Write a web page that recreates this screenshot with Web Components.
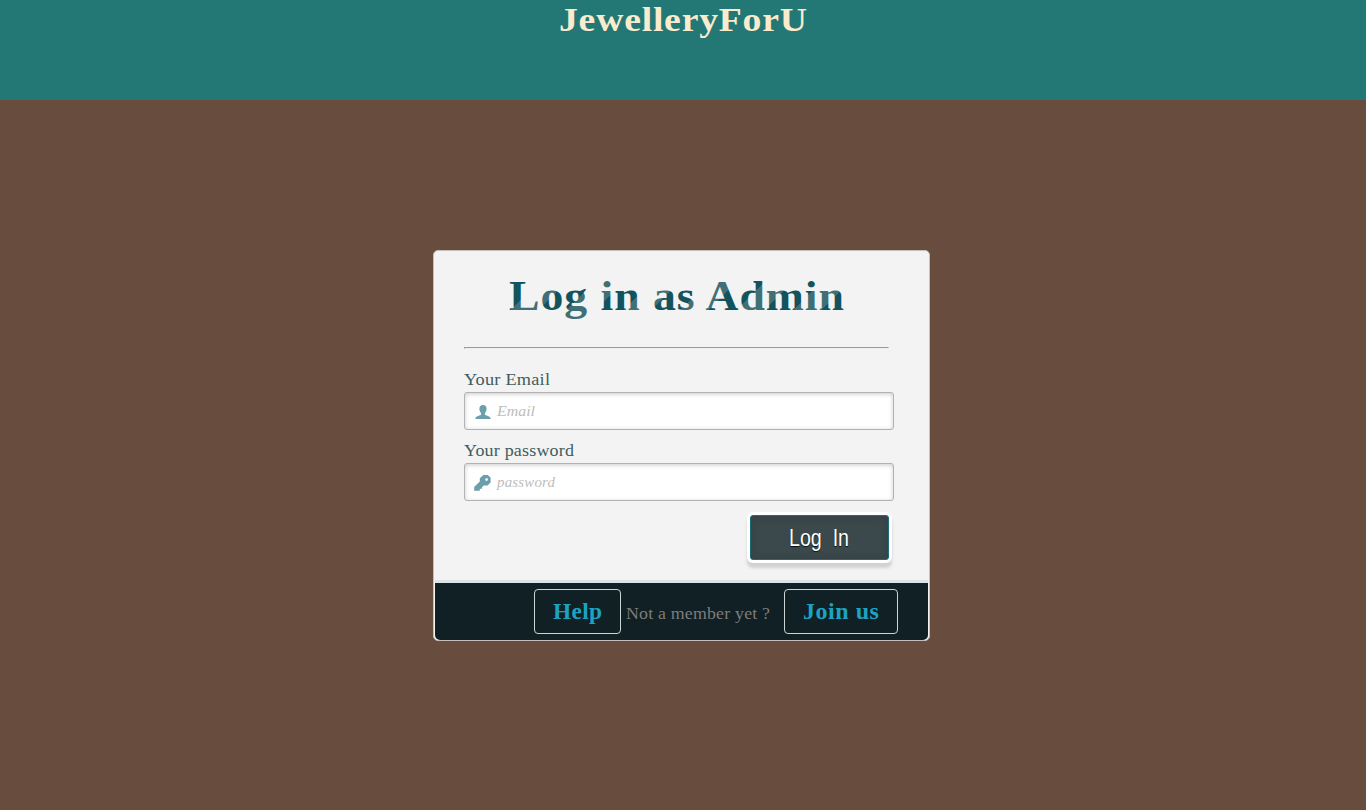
<!DOCTYPE html>
<html lang="en">
<head>
<meta charset="utf-8">
<title>JewelleryForU</title>
<style>
body{margin:0;background:#684c3e;height:810px;overflow:hidden;font-family:"Liberation Serif",serif}
</style>
</head>
<body>
<login-page></login-page>
<script>
// One line of text, set to a fixed measure. Attributes: w, h, size, base, x, track.
class FitText extends HTMLElement {
  connectedCallback() {
    const a = n => this.getAttribute(n);
    const x = a('x') || 0;
    this.attachShadow({mode: 'open'}).innerHTML = `
      <style>:host{display:block;flex:none;width:${a('w')}px;height:${a('h')}px}
      svg{display:block;overflow:visible}
      text{font-size:${a('size')}px;letter-spacing:${a('track') || 0}px;fill:var(--ink,currentColor);white-space:pre}</style>
      <svg width="${a('w')}" height="${a('h')}">
        <defs><linearGradient id="stripes" gradientUnits="userSpaceOnUse" x1="7" y1="7" x2="35.3" y2="35.3" spreadMethod="repeat">
          <stop offset="0" stop-color="#12535d"/><stop offset=".5" stop-color="#12535d"/>
          <stop offset=".5" stop-color="#406f76"/><stop offset="1" stop-color="#406f76"/>
        </linearGradient></defs>
        <text x="${x}" y="${a('base')}" textLength="${+a('w') + +(a('track') || 0)}" lengthAdjust="spacingAndGlyphs"></text>
      </svg>`;
    const t = this.shadowRoot.querySelector('text');
    t.textContent = this.textContent;
    if (this.hasAttribute('striped')) t.setAttribute('style', 'fill:url(#stripes)');
  }
}
customElements.define('fit-text', FitText);

class SiteHeader extends HTMLElement {
  connectedCallback() {
    this.attachShadow({mode: 'open'}).innerHTML = `
      <style>:host{display:flex;justify-content:center;height:100px;background:#237876;color:#faebcd;font-weight:bold}</style>
      <slot></slot>`;
  }
}
customElements.define('site-header', SiteHeader);

const ICONS = {
  user: '<path d="M8 0C5.7 0 4.3 1.5 4.4 3.7c0 1.8.7 3.3 1.7 4.3v1.5C5.6 10.7.5 11 .5 13.2V14h15v-.8c0-2.2-5.1-2.5-5.6-3.7V8c1-1 1.7-2.5 1.7-4.3C11.7 1.5 10.3 0 8 0Z"/>',
  key: '<path fill-rule="evenodd" d="M9.4 0h4.2L16.6 2.6v4.8l-3.1 3.2H9.8L8 12.2v1.6H5.8v2H.2v-3.8l5.6-5.6V3.2ZM12.6 3.2a1.4 1.4 0 1 0 0 2.8 1.4 1.4 0 0 0 0-2.8Z"/>'
};
class IconField extends HTMLElement {
  connectedCallback() {
    const i = this.getAttribute('icon');
    this.attachShadow({mode: 'open'}).innerHTML = `
      <style>:host{display:flex;flex-direction:column;width:430px;height:71px;color:#405c60}
      .box{box-sizing:border-box;display:flex;align-items:center;height:38px;margin-top:4px;padding:2px 0 0 9px;gap:5px;
        border:1px solid #b2b2b2;border-radius:3px;background:#fff;box-shadow:inset 0 1px 4px rgba(168,168,168,.6)}
      svg{width:17px;height:16px;fill:#6a9fab;flex:none}
      .hint{color:#bebcbc;font-style:italic;margin-left:1px}</style>
      <slot></slot><div class="box"><svg viewBox="${i === 'user' ? '-1 -1' : '0 0'} 17 16">${ICONS[i]}</svg><span class="hint"><slot name="hint"></slot></span></div>`;
  }
}
customElements.define('icon-field', IconField);

class SubmitButton extends HTMLElement {
  connectedCallback() {
    this.attachShadow({mode: 'open'}).innerHTML = `
      <style>:host{display:block;width:139px;height:45px}
      button{box-sizing:border-box;display:flex;justify-content:center;width:100%;height:100%;padding:0 2px 0 0;border:1px solid #1c6c7a;border-radius:3px;
        background:#3b494c;color:#fff;font-family:"Liberation Sans",sans-serif;
        box-shadow:0 1px 6px 4px rgba(0,0,0,.07) inset,0 0 0 3px #fefefe,0 5px 3px 3px #d2d2d2;text-shadow:0 1px 1px rgba(0,0,0,.8)}</style>
      <button><slot></slot></button>`;
  }
}
customElements.define('submit-button', SubmitButton);

class OutlineLink extends HTMLElement {
  connectedCallback() {
    this.attachShadow({mode: 'open'}).innerHTML = `
      <style>:host{box-sizing:border-box;display:flex;justify-content:center;flex:none;height:45px;border:1px solid #cbd5d6;border-radius:4px;color:#1da2c1;font-weight:bold}</style>
      <slot></slot>`;
  }
}
customElements.define('outline-link', OutlineLink);

class LoginCard extends HTMLElement {
  connectedCallback() {
    this.attachShadow({mode: 'open'}).innerHTML = `
      <style>:host{box-sizing:border-box;display:flex;flex-direction:column;width:497px;height:391px;margin:150px 0 0 433px;
        background:#f3f3f3;border:1px solid #c7bebb;border-radius:5px;overflow:hidden}
      .body{box-sizing:border-box;height:329px;padding:18px 0 0 30px}
      footer{box-sizing:border-box;display:flex;height:60px;margin:0 1px;padding:6px 0 0 99px;border-top:3px solid #dbe5e8;border-radius:0 0 5px 5px;background:#102024;color:#7f7c7c}</style>
      <div class="body"><slot></slot></div><footer><slot name="footer"></slot></footer>`;
  }
}
customElements.define('login-card', LoginCard);

class LoginPage extends HTMLElement {
  connectedCallback() {
    this.attachShadow({mode: 'open'}).innerHTML = `
      <style>:host{display:block}
      h1{margin:0;padding-left:45px;height:78px;font-weight:bold}
      .rule{box-sizing:border-box;width:425px;height:2px;border:1px solid #9a9a9a;border-right-color:#eee;border-bottom-color:#eee;margin-bottom:19px}
      submit-button{margin:5px 0 0 286px}
      .help{width:87px}.ask{margin-left:5px}.join{width:114px;margin-left:14px}</style>
      <site-header><fit-text w="248" h="40" size="34.5" track=".7" base="31">JewelleryForU</fit-text></site-header>
      <login-card>
        <h1><fit-text striped w="335" h="60" size="43" track=".9" base="41">Log in as Admin</fit-text></h1>
        <div class="rule"></div>
        <icon-field icon="user"><fit-text w="86" h="20" size="17" track=".2" base="17">Your Email</fit-text>
          <fit-text slot="hint" w="38" h="20" size="14" base="14">Email</fit-text></icon-field>
        <icon-field icon="key"><fit-text w="110" h="20" size="17" track=".2" base="17">Your password</fit-text>
          <fit-text slot="hint" w="58" h="20" size="14" track=".2" base="14">password</fit-text></icon-field>
        <submit-button><fit-text w="60" h="43" size="23" base="30">Log  In</fit-text></submit-button>
        <outline-link slot="footer" class="help"><fit-text w="49" h="40" size="22.5" track=".3" base="29.4">Help</fit-text></outline-link>
        <fit-text slot="footer" class="ask" w="144" h="45" size="17" track=".2" base="30.3">Not a member yet ?</fit-text>
        <outline-link slot="footer" class="join"><fit-text w="76" h="40" size="22.5" track=".5" base="29.4">Join us</fit-text></outline-link>
      </login-card>`;
  }
}
customElements.define('login-page', LoginPage);
</script>
</body>
</html>
